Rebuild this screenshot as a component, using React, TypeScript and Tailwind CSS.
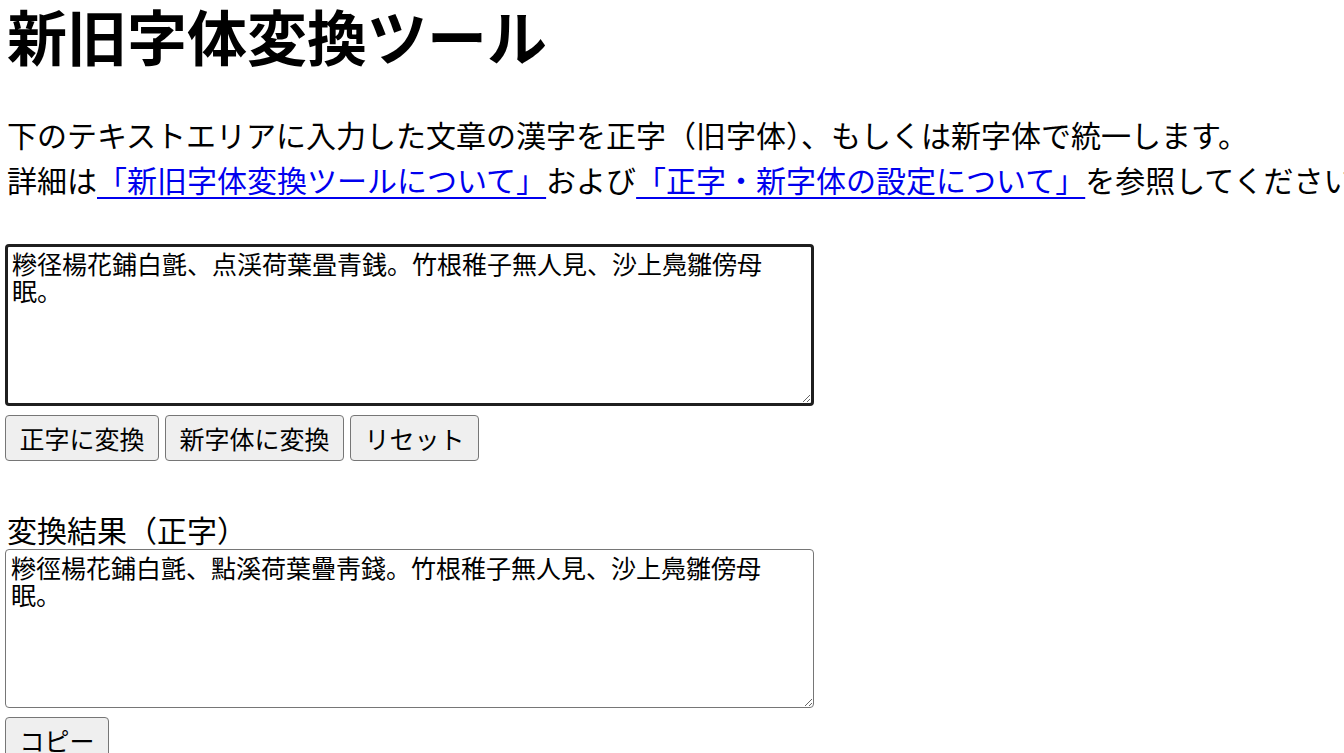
const FONT = { fontFamily: '"Noto Sans CJK JP", "Noto Sans", sans-serif' }

const SOURCE = '糝径楊花鋪白氈、点渓荷葉畳青銭。竹根稚子無人見、沙上鳧雛傍母眠。'
const RESULT = '糝徑楊花鋪白氈、點溪荷葉疊靑錢。竹根稚子無人見、沙上鳧雛傍母眠。'

function Btn({ children }: { children: React.ReactNode }) {
  return (
    <button
      type="button"
      className="h-[46px] px-[13.5px] text-[25px] leading-[36px] text-black bg-[#efefef] border border-[#767676] rounded-[4px]"
    >
      {children}
    </button>
  )
}

export default function App() {
  return (
    <div className="h-screen w-screen overflow-hidden bg-white text-black" style={FONT}>
      <div className="pl-[7px]">
        <h1 className="text-[60px] leading-[70px] font-bold whitespace-nowrap">新旧字体変換ツール</h1>

        <p className="mt-[42px] text-[30px] leading-[45px] whitespace-nowrap">
          下のテキストエリアに入力した文章の漢字を正字（旧字体）、もしくは新字体で統一します。
          <br />
          詳細は
          <a href="#" className="text-[#0000ee] underline decoration-2 underline-offset-[5px]">
            「新旧字体変換ツールについて」
          </a>
          および
          <a href="#" className="text-[#0000ee] underline decoration-2 underline-offset-[5px]">
            「正字・新字体の設定について」
          </a>
          を参照してください。
        </p>
      </div>

      <div className="pl-[5px]">
        {/* 入力欄 */}
        <textarea
          defaultValue={SOURCE}
          className="block mt-[42px] w-[809px] h-[162px] px-[4px] pt-[3px] text-[25px] leading-[27px] border-[3px] border-[#1f1f1f] rounded-[4px] outline-none resize"
          style={FONT}
        />

        <div className="flex gap-[6px] mt-[9px]">
          <Btn>正字に変換</Btn>
          <Btn>新字体に変換</Btn>
          <Btn>リセット</Btn>
        </div>

        {/* 変換結果 */}
        <div className="mt-[48px] pl-[2px] text-[30px] leading-[40px]">変換結果（正字）</div>
        <textarea
          readOnly
          value={RESULT}
          className="block w-[809px] h-[159px] px-[5px] pt-[4px] text-[25px] leading-[27px] border border-[#767676] rounded-[4px] outline-none resize"
          style={FONT}
        />

        <div className="mt-[9px]">
          <Btn>コピー</Btn>
        </div>
      </div>
    </div>
  )
}
